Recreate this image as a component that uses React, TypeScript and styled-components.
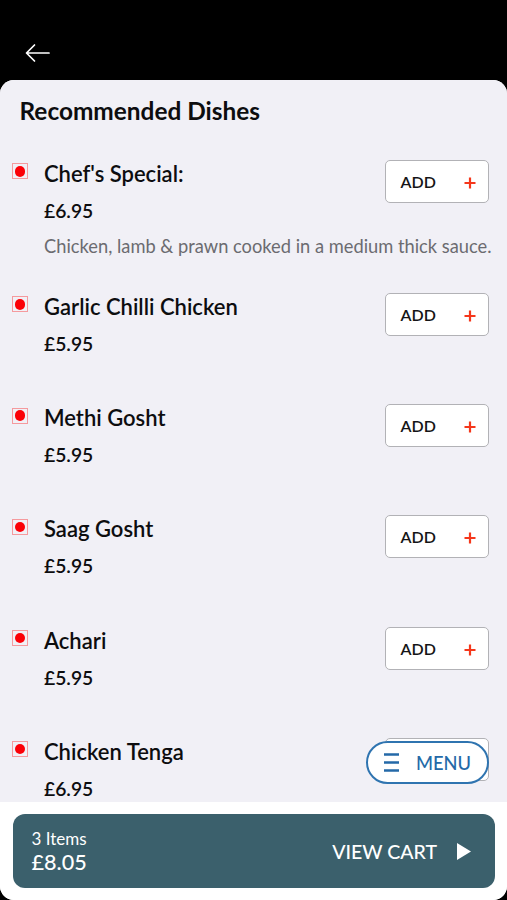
import React from "react";
import styled, { createGlobalStyle } from "styled-components";

const GlobalStyle = createGlobalStyle`
  * { box-sizing: border-box; }
  body { margin: 0; background: #000; font-family: Lato, "Liberation Sans", sans-serif; color: #0d0d0f; }
  button { font: inherit; margin: 0; cursor: pointer; }
`;

const Screen = styled.div`
  width: 507px;
  height: 900px;
  display: flex;
  flex-direction: column;
  overflow: hidden;
  background: #000;
`;

const TopBar = styled.header`
  flex: none;
  height: 80px;
  padding: 43px 0 0 25px;
`;

const BackButton = styled.button`
  display: block;
  padding: 0;
  border: 0;
  background: none;
  svg { display: block; }
`;

const Sheet = styled.main`
  position: relative;
  flex: 1;
  min-height: 0;
  display: flex;
  flex-direction: column;
  overflow: hidden;
  border-radius: 14px;
  background: #fff;
`;

const Content = styled.section`
  height: 722px;
  flex: none;
  overflow: hidden;
  background: #f1f0f6;
`;

const Heading = styled.h1`
  margin: 0;
  padding: 17px 20px 0 19.5px;
  height: 80px;
  font-size: 24.4px;
  line-height: 28px;
  font-weight: 700;
`;

const DishList = styled.ul`
  margin: 0;
  padding: 0;
  list-style: none;
`;

const Dish = styled.li<{ $tall: boolean }>`
  display: grid;
  grid-template-columns: 16px minmax(0, 1fr) 104px;
  column-gap: 16px;
  align-content: start;
  height: ${(p) => (p.$tall ? 133 : 111.2)}px;
  padding: 0 18px 0 12px;
`;

const Marker = styled.span`
  display: flex;
  align-items: center;
  justify-content: center;
  width: 16px;
  height: 16px;
  margin-top: 3.4px;
  border: 1px solid #f59a9e;
  &::after {
    content: "";
    width: 10.5px;
    height: 10.5px;
    border-radius: 50%;
    background: #fb0007;
  }
`;

const Name = styled.h2`
  margin: 0;
  font-size: 22px;
  line-height: 28px;
  font-weight: 600;
  white-space: nowrap;
`;

const Price = styled.p`
  margin: 9px 0 0;
  font-size: 19.3px;
  line-height: 28px;
  font-weight: 600;
`;

const Description = styled.p`
  margin: 8px 0 0;
  font-size: 18.3px;
  line-height: 26px;
  color: #6b6b70;
  white-space: nowrap;
`;

const AddButton = styled.button`
  display: flex;
  align-items: center;
  justify-content: space-between;
  height: 43px;
  padding: 0 12px 0 14.5px;
  border: 1px solid #b2b2b6;
  border-radius: 5px;
  background: #fff;
  color: #151517;
  && { font-size: 16px; font-weight: 600; }
  svg { display: block; margin-top: 3px; }
`;

const MenuButton = styled.button`
  position: absolute;
  right: 18px;
  top: 661px;
  display: flex;
  align-items: center;
  gap: 17px;
  width: 123px;
  height: 43px;
  padding: 0 0 0 16px;
  border: 2px solid #2f74b0;
  border-radius: 22px;
  background: #fff;
  color: #2469a8;
  && { font-size: 18.3px; font-weight: 500; }
`;

const Footer = styled.footer`
  flex: 1;
  padding: 12px 12px 12px 13px;
  background: #fff;
`;

const Cart = styled.button`
  display: flex;
  align-items: center;
  width: 100%;
  height: 74px;
  padding: 0 24px 0 18.5px;
  border: 0;
  border-radius: 12px;
  background: #3b606c;
  color: #fff;
  text-align: left;
`;

const Summary = styled.span`
  flex: 1;
  display: flex;
  flex-direction: column;
`;

const Count = styled.span`
  font-size: 17px;
  line-height: 23px;
`;

const Total = styled.span`
  font-size: 21.6px;
  line-height: 25px;
  font-weight: 500;
`;

const CartLabel = styled.span`
  margin-right: 20px;
  font-size: 19.5px;
  font-weight: 500;
`;

type DishData = { name: string; price: string; description?: string };

const dishes: DishData[] = [
  { name: "Chef's Special:", price: "£6.95", description: "Chicken, lamb & prawn cooked in a medium thick sauce." },
  { name: "Garlic Chilli Chicken", price: "£5.95" },
  { name: "Methi Gosht", price: "£5.95" },
  { name: "Saag Gosht", price: "£5.95" },
  { name: "Achari", price: "£5.95" },
  { name: "Chicken Tenga", price: "£6.95" },
];

export default function App() {
  return (
    <>
      <GlobalStyle />
      <Screen>
        <TopBar>
          <BackButton aria-label="Back">
            <svg width="26" height="20" viewBox="0 0 26 20" fill="none" stroke="#fff" strokeWidth="1.7" strokeLinecap="round" strokeLinejoin="round">
              <path d="M9.5 2 1.5 10l8 8M2 10h22" />
            </svg>
          </BackButton>
        </TopBar>
        <Sheet>
          <Content>
            <Heading>Recommended Dishes</Heading>
            <DishList>
              {dishes.map((dish) => (
                <Dish key={dish.name} $tall={!!dish.description}>
                  <Marker />
                  <div>
                    <Name>{dish.name}</Name>
                    <Price>{dish.price}</Price>
                    {dish.description && <Description>{dish.description}</Description>}
                  </div>
                  <AddButton>
                    ADD
                    <svg width="12" height="12" viewBox="0 0 12 12" stroke="#f5371b" strokeWidth="2.2">
                      <path d="M6 .5v11M.5 6h11" />
                    </svg>
                  </AddButton>
                </Dish>
              ))}
            </DishList>
          </Content>
          <Footer>
            <Cart>
              <Summary>
                <Count>3 Items</Count>
                <Total>£8.05</Total>
              </Summary>
              <CartLabel>VIEW CART</CartLabel>
              <svg width="14" height="17" viewBox="0 0 14 17" fill="#fff">
                <path d="M0 0 14 8.5 0 17z" />
              </svg>
            </Cart>
          </Footer>
          <MenuButton>
            <svg width="15" height="19" viewBox="0 0 15 19" stroke="#2469a8" strokeWidth="2.7">
              <path d="M0 1.5h15M0 9.5h15M0 17.5h15" />
            </svg>
            MENU
          </MenuButton>
        </Sheet>
      </Screen>
    </>
  );
}
